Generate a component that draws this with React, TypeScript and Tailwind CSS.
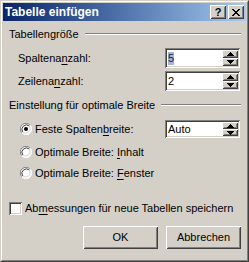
import React from "react";

const RAISED =
  "shadow-[inset_1px_1px_0_#ffffff,inset_-1px_-1px_0_#404040,inset_2px_2px_0_#d4d0c8,inset_-2px_-2px_0_#808080]";
const SUNKEN =
  "shadow-[inset_1px_1px_0_#808080,inset_-1px_-1px_0_#ffffff,inset_2px_2px_0_#404040,inset_-2px_-2px_0_#d4d0c8]";

function Key({ children }: { children: React.ReactNode }) {
  return <span className="underline underline-offset-[2px]">{children}</span>;
}

function GroupHeader({ children }: { children: React.ReactNode }) {
  return (
    <div className="flex items-center h-[14px] pl-[6px] pr-[5px]">
      <span className="whitespace-nowrap">{children}</span>
      <div className="flex-1 ml-[6px] h-[2px] border-t border-t-[#808080] border-b border-b-white" />
    </div>
  );
}

function Arrow({ up }: { up?: boolean }) {
  return (
    <svg width="7" height="4" viewBox="0 0 7 4" className="block">
      {up ? (
        <path d="M3 0h1v1h1v1h1v1h1v1H0V3h1V2h1V1h1z" fill="#000" />
      ) : (
        <path d="M0 0h7v1H6v1H5v1H4v1H3V3H2V2H1V1H0z" fill="#000" />
      )}
    </svg>
  );
}

function SpinBox({ value, selected, h }: { value: string; selected?: boolean; h: number }) {
  return (
    <div
      className={`flex w-[75px] bg-white p-[2px] ${SUNKEN}`}
      style={{ height: h }}
    >
      <div className="flex-1 flex items-center pl-[1px]">
        <span className={selected ? "bg-[#a8b4d2] text-[#0a246a] leading-[13px]" : "leading-[13px]"}>
          {value}
        </span>
      </div>
      <div className="flex flex-col w-[16px]">
        <div className={`flex-1 flex items-center justify-center bg-[#d4d0c8] ${RAISED}`}>
          <Arrow up />
        </div>
        <div className={`flex-1 flex items-center justify-center bg-[#d4d0c8] ${RAISED}`}>
          <Arrow />
        </div>
      </div>
    </div>
  );
}

function Radio({ checked }: { checked?: boolean }) {
  return (
    <svg width="12" height="12" viewBox="0 0 12 12" className="block shrink-0">
      <circle cx="6" cy="6" r="5.5" fill="#ffffff" />
      <path d="M10.2 2.2A5.5 5.5 0 0 0 1.8 9.8" stroke="#808080" strokeWidth="1" fill="none" />
      <path d="M9.3 3A4.5 4.5 0 0 0 2.7 9" stroke="#404040" strokeWidth="1" fill="none" />
      <path d="M1.8 9.8A5.5 5.5 0 0 0 10.2 2.2" stroke="#ffffff" strokeWidth="1" fill="none" />
      <path d="M2.7 9A4.5 4.5 0 0 0 9.3 3" stroke="#d4d0c8" strokeWidth="1" fill="none" />
      {checked && <circle cx="6" cy="6" r="2" fill="#000" />}
    </svg>
  );
}

function Button({ children }: { children: React.ReactNode }) {
  return (
    <div className={`w-[75px] h-[23px] flex items-center justify-center bg-[#d4d0c8] ${RAISED}`}>
      {children}
    </div>
  );
}

export default function App() {
  return (
    <div
      className="w-[249px] h-[262px] bg-[#d4d0c8] text-black text-[11px] leading-[13px] border border-t-[#d4d0c8] border-l-[#d4d0c8] border-r-[#404040] border-b-[#404040]"
      style={{ fontFamily: '"Liberation Sans", Arial, sans-serif' }}
    >
      <div className="h-full border border-t-white border-l-white border-r-[#808080] border-b-[#808080] p-[1px] flex flex-col">
        {/* title bar */}
        <div className="h-[18px] flex items-center bg-gradient-to-r from-[#0a246a] to-[#a6caf0] pl-[2px] pr-[2px]">
          <span className="flex-1 text-white font-bold text-[12px]">Tabelle einfügen</span>
          <div className={`w-[16px] h-[14px] flex items-center justify-center bg-[#d4d0c8] font-bold text-[11px] ${RAISED}`}>
            ?
          </div>
          <div className={`ml-[2px] w-[16px] h-[14px] flex items-center justify-center bg-[#d4d0c8] ${RAISED}`}>
            <svg width="8" height="7" viewBox="0 0 8 7" className="block">
              <path d="M0 0h2v1h1v1h2V1h1V0h2v1H7v1H6v1H5v1h1v1h1v1h1v1H6V6H5V5H3v1H2v1H0V6h1V5h1V4h1V3H2V2H1V1H0z" fill="#000" />
            </svg>
          </div>
        </div>

        {/* client */}
        <div className="flex-1 flex flex-col">
          <div className="mt-[6px]">
            <GroupHeader>Tabellengröße</GroupHeader>
          </div>

          <div className="mt-[7px] flex items-center pl-[15px] pr-[6px]">
            <span className="flex-1">
              Spaltena<Key>n</Key>zahl:
            </span>
            <SpinBox value="5" selected h={20} />
          </div>
          <div className="mt-[3px] flex items-center pl-[15px] pr-[6px]">
            <span className="flex-1">
              Zeilena<Key>n</Key>zahl:
            </span>
            <SpinBox value="2" h={20} />
          </div>

          <div className="mt-[7px]">
            <GroupHeader>Einstellung für optimale Breite</GroupHeader>
          </div>

          <div className="mt-[8px] flex items-center pl-[17px] pr-[6px]">
            <div className="flex-1 flex items-center gap-[3px]">
              <Radio checked />
              <span>
                Feste Spalten<Key>b</Key>reite:
              </span>
            </div>
            <SpinBox value="Auto" h={18} />
          </div>
          <div className="mt-[6px] h-[16px] flex items-center gap-[3px] pl-[17px]">
            <Radio />
            <span>
              Optimale Breite: <Key>I</Key>nhalt
            </span>
          </div>
          <div className="mt-[5px] h-[16px] flex items-center gap-[3px] pl-[17px]">
            <Radio />
            <span>
              Optimale Breite: <Key>F</Key>enster
            </span>
          </div>

          <div className="mt-[19px] h-[16px] flex items-center gap-[3px] pl-[6px]">
            <div className={`w-[13px] h-[13px] bg-white shrink-0 ${SUNKEN}`} />
            <span>
              Ab<Key>m</Key>essungen für neue Tabellen speichern
            </span>
          </div>

          <div className="mt-[10px] flex justify-end gap-[8px] pr-[5px]">
            <Button>OK</Button>
            <Button>Abbrechen</Button>
          </div>
        </div>
      </div>
    </div>
  );
}
